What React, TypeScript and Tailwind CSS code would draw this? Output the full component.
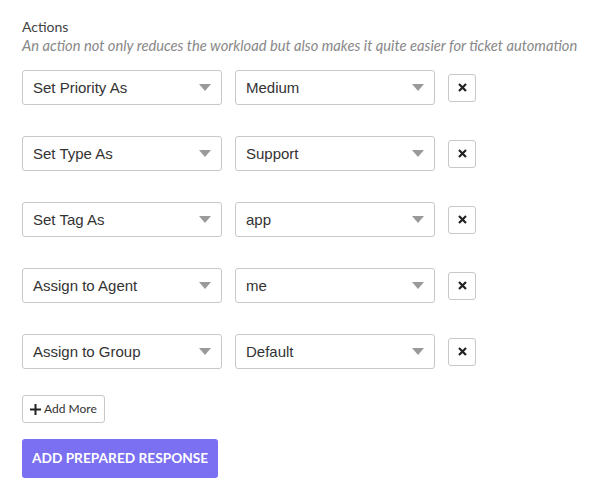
import React from 'react';

const rows = [
  { action: 'Set Priority As', value: 'Medium' },
  { action: 'Set Type As', value: 'Support' },
  { action: 'Set Tag As', value: 'app' },
  { action: 'Assign to Agent', value: 'me' },
  { action: 'Assign to Group', value: 'Default' },
];

const SelectBox: React.FC<{ label: string }> = ({ label }) => (
  <div className="flex h-[35px] w-[200px] items-center justify-between rounded-[3px] border border-[#c8c8c8] bg-white pl-[10px] pr-[10px] font-['Liberation_Sans',Arial,sans-serif] text-[15px] text-[#333]">
    <span className="pt-[2px]">{label}</span>
    <svg width="12" height="7" viewBox="0 0 12 7">
      <path d="M0 0 L12 0 L6 7 Z" fill="#9a9a9a" />
    </svg>
  </div>
);

export default function App() {
  return (
    <div className="min-h-[498px] bg-white px-[22px] pt-[18px] font-['Lato',sans-serif]">
      <div className="text-[14px] leading-[18px] text-[#444]">Actions</div>
      <div className="whitespace-nowrap text-[14.7px] italic leading-[18px] text-[#888]">
        An action not only reduces the workload but also makes it quite easier for ticket automation
      </div>

      <div className="mt-[16px] flex flex-col gap-[31px]">
        {rows.map((r) => (
          <div key={r.action} className="flex items-center gap-[13px]">
            <SelectBox label={r.action} />
            <SelectBox label={r.value} />
            <button className="flex h-[28px] w-[28px] items-center justify-center rounded-[3px] border border-[#c8c8c8] bg-white">
              <svg width="9" height="9" viewBox="0 0 9 9">
                <path d="M1 1 L8 8 M8 1 L1 8" stroke="#222" strokeWidth="2.2" />
              </svg>
            </button>
          </div>
        ))}
      </div>

      <button className="mt-[26px] flex h-[28px] items-center gap-[3px] rounded-[3px] border border-[#c8c8c8] bg-white px-[7px] text-[12px] text-[#333]">
        <svg width="11" height="11" viewBox="0 0 11 11">
          <path d="M5.5 0 V11 M0 5.5 H11" stroke="#222" strokeWidth="2" />
        </svg>
        <span>Add More</span>
      </button>

      <button className="mt-[16px] flex h-[39px] items-center rounded-[3px] bg-[#7b6ff2] px-[10px] text-[13.7px] font-bold uppercase text-white">
        Add Prepared Response
      </button>
    </div>
  );
}
